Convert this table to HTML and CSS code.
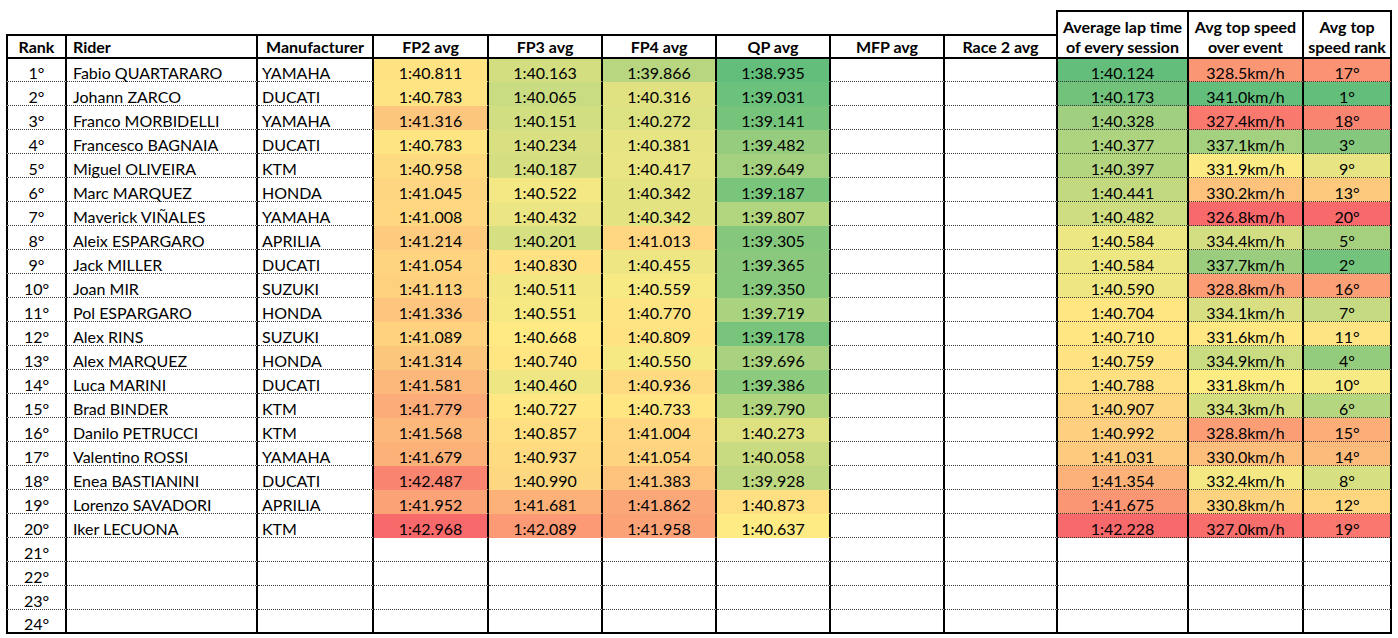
FILE: index.html
```html
<!DOCTYPE html>
<html lang="en">
<head>
<meta charset="utf-8">
<title>Session averages</title>
<link rel="stylesheet" href="styles.css">
</head>
<body>
<div class="sheet">
  <div class="spacer"></div>
  <div class="c tall"><span>Average lap time</span><span>of every session</span></div>
  <div class="c tall"><span>Avg top speed</span><span>over event</span></div>
  <div class="c tall"><span>Avg top</span><span>speed rank</span></div>

  <div class="row head">
    <div class="c">Rank</div><div class="c rider">Rider</div><div class="c manu">Manufacturer</div>
    <div class="c">FP2 avg</div><div class="c">FP3 avg</div><div class="c">FP4 avg</div><div class="c">QP avg</div>
    <div class="c">MFP avg</div><div class="c">Race 2 avg</div>
  </div>

  <div class="row"><div class="c">1°</div><div class="c rider">Fabio QUARTARARO</div><div class="c manu">YAMAHA</div><div class="c lap">1:40.811</div><div class="c lap">1:40.163</div><div class="c lap">1:39.866</div><div class="c lap">1:38.935</div><div class="c"></div><div class="c"></div><div class="c avg">1:40.124</div><div class="c spd">328.5km/h</div><div class="c rk">17°</div></div>
  <div class="row"><div class="c">2°</div><div class="c rider">Johann ZARCO</div><div class="c manu">DUCATI</div><div class="c lap">1:40.783</div><div class="c lap">1:40.065</div><div class="c lap">1:40.316</div><div class="c lap">1:39.031</div><div class="c"></div><div class="c"></div><div class="c avg">1:40.173</div><div class="c spd">341.0km/h</div><div class="c rk">1°</div></div>
  <div class="row"><div class="c">3°</div><div class="c rider">Franco MORBIDELLI</div><div class="c manu">YAMAHA</div><div class="c lap">1:41.316</div><div class="c lap">1:40.151</div><div class="c lap">1:40.272</div><div class="c lap">1:39.141</div><div class="c"></div><div class="c"></div><div class="c avg">1:40.328</div><div class="c spd">327.4km/h</div><div class="c rk">18°</div></div>
  <div class="row"><div class="c">4°</div><div class="c rider">Francesco BAGNAIA</div><div class="c manu">DUCATI</div><div class="c lap">1:40.783</div><div class="c lap">1:40.234</div><div class="c lap">1:40.381</div><div class="c lap">1:39.482</div><div class="c"></div><div class="c"></div><div class="c avg">1:40.377</div><div class="c spd">337.1km/h</div><div class="c rk">3°</div></div>
  <div class="row"><div class="c">5°</div><div class="c rider">Miguel OLIVEIRA</div><div class="c manu">KTM</div><div class="c lap">1:40.958</div><div class="c lap">1:40.187</div><div class="c lap">1:40.417</div><div class="c lap">1:39.649</div><div class="c"></div><div class="c"></div><div class="c avg">1:40.397</div><div class="c spd">331.9km/h</div><div class="c rk">9°</div></div>
  <div class="row"><div class="c">6°</div><div class="c rider">Marc MARQUEZ</div><div class="c manu">HONDA</div><div class="c lap">1:41.045</div><div class="c lap">1:40.522</div><div class="c lap">1:40.342</div><div class="c lap">1:39.187</div><div class="c"></div><div class="c"></div><div class="c avg">1:40.441</div><div class="c spd">330.2km/h</div><div class="c rk">13°</div></div>
  <div class="row"><div class="c">7°</div><div class="c rider">Maverick VIÑALES</div><div class="c manu">YAMAHA</div><div class="c lap">1:41.008</div><div class="c lap">1:40.432</div><div class="c lap">1:40.342</div><div class="c lap">1:39.807</div><div class="c"></div><div class="c"></div><div class="c avg">1:40.482</div><div class="c spd">326.8km/h</div><div class="c rk">20°</div></div>
  <div class="row"><div class="c">8°</div><div class="c rider">Aleix ESPARGARO</div><div class="c manu">APRILIA</div><div class="c lap">1:41.214</div><div class="c lap">1:40.201</div><div class="c lap">1:41.013</div><div class="c lap">1:39.305</div><div class="c"></div><div class="c"></div><div class="c avg">1:40.584</div><div class="c spd">334.4km/h</div><div class="c rk">5°</div></div>
  <div class="row"><div class="c">9°</div><div class="c rider">Jack MILLER</div><div class="c manu">DUCATI</div><div class="c lap">1:41.054</div><div class="c lap">1:40.830</div><div class="c lap">1:40.455</div><div class="c lap">1:39.365</div><div class="c"></div><div class="c"></div><div class="c avg">1:40.584</div><div class="c spd">337.7km/h</div><div class="c rk">2°</div></div>
  <div class="row"><div class="c">10°</div><div class="c rider">Joan MIR</div><div class="c manu">SUZUKI</div><div class="c lap">1:41.113</div><div class="c lap">1:40.511</div><div class="c lap">1:40.559</div><div class="c lap">1:39.350</div><div class="c"></div><div class="c"></div><div class="c avg">1:40.590</div><div class="c spd">328.8km/h</div><div class="c rk">16°</div></div>
  <div class="row"><div class="c">11°</div><div class="c rider">Pol ESPARGARO</div><div class="c manu">HONDA</div><div class="c lap">1:41.336</div><div class="c lap">1:40.551</div><div class="c lap">1:40.770</div><div class="c lap">1:39.719</div><div class="c"></div><div class="c"></div><div class="c avg">1:40.704</div><div class="c spd">334.1km/h</div><div class="c rk">7°</div></div>
  <div class="row"><div class="c">12°</div><div class="c rider">Alex RINS</div><div class="c manu">SUZUKI</div><div class="c lap">1:41.089</div><div class="c lap">1:40.668</div><div class="c lap">1:40.809</div><div class="c lap">1:39.178</div><div class="c"></div><div class="c"></div><div class="c avg">1:40.710</div><div class="c spd">331.6km/h</div><div class="c rk">11°</div></div>
  <div class="row"><div class="c">13°</div><div class="c rider">Alex MARQUEZ</div><div class="c manu">HONDA</div><div class="c lap">1:41.314</div><div class="c lap">1:40.740</div><div class="c lap">1:40.550</div><div class="c lap">1:39.696</div><div class="c"></div><div class="c"></div><div class="c avg">1:40.759</div><div class="c spd">334.9km/h</div><div class="c rk">4°</div></div>
  <div class="row"><div class="c">14°</div><div class="c rider">Luca MARINI</div><div class="c manu">DUCATI</div><div class="c lap">1:41.581</div><div class="c lap">1:40.460</div><div class="c lap">1:40.936</div><div class="c lap">1:39.386</div><div class="c"></div><div class="c"></div><div class="c avg">1:40.788</div><div class="c spd">331.8km/h</div><div class="c rk">10°</div></div>
  <div class="row"><div class="c">15°</div><div class="c rider">Brad BINDER</div><div class="c manu">KTM</div><div class="c lap">1:41.779</div><div class="c lap">1:40.727</div><div class="c lap">1:40.733</div><div class="c lap">1:39.790</div><div class="c"></div><div class="c"></div><div class="c avg">1:40.907</div><div class="c spd">334.3km/h</div><div class="c rk">6°</div></div>
  <div class="row"><div class="c">16°</div><div class="c rider">Danilo PETRUCCI</div><div class="c manu">KTM</div><div class="c lap">1:41.568</div><div class="c lap">1:40.857</div><div class="c lap">1:41.004</div><div class="c lap">1:40.273</div><div class="c"></div><div class="c"></div><div class="c avg">1:40.992</div><div class="c spd">328.8km/h</div><div class="c rk">15°</div></div>
  <div class="row"><div class="c">17°</div><div class="c rider">Valentino ROSSI</div><div class="c manu">YAMAHA</div><div class="c lap">1:41.679</div><div class="c lap">1:40.937</div><div class="c lap">1:41.054</div><div class="c lap">1:40.058</div><div class="c"></div><div class="c"></div><div class="c avg">1:41.031</div><div class="c spd">330.0km/h</div><div class="c rk">14°</div></div>
  <div class="row"><div class="c">18°</div><div class="c rider">Enea BASTIANINI</div><div class="c manu">DUCATI</div><div class="c lap">1:42.487</div><div class="c lap">1:40.990</div><div class="c lap">1:41.383</div><div class="c lap">1:39.928</div><div class="c"></div><div class="c"></div><div class="c avg">1:41.354</div><div class="c spd">332.4km/h</div><div class="c rk">8°</div></div>
  <div class="row"><div class="c">19°</div><div class="c rider">Lorenzo SAVADORI</div><div class="c manu">APRILIA</div><div class="c lap">1:41.952</div><div class="c lap">1:41.681</div><div class="c lap">1:41.862</div><div class="c lap">1:40.873</div><div class="c"></div><div class="c"></div><div class="c avg">1:41.675</div><div class="c spd">330.8km/h</div><div class="c rk">12°</div></div>
  <div class="row"><div class="c">20°</div><div class="c rider">Iker LECUONA</div><div class="c manu">KTM</div><div class="c lap">1:42.968</div><div class="c lap">1:42.089</div><div class="c lap">1:41.958</div><div class="c lap">1:40.637</div><div class="c"></div><div class="c"></div><div class="c avg">1:42.228</div><div class="c spd">327.0km/h</div><div class="c rk">19°</div></div>
  <div class="row"><div class="c">21°</div><div class="c"></div><div class="c"></div><div class="c"></div><div class="c"></div><div class="c"></div><div class="c"></div><div class="c"></div><div class="c"></div><div class="c"></div><div class="c"></div><div class="c"></div></div>
  <div class="row"><div class="c">22°</div><div class="c"></div><div class="c"></div><div class="c"></div><div class="c"></div><div class="c"></div><div class="c"></div><div class="c"></div><div class="c"></div><div class="c"></div><div class="c"></div><div class="c"></div></div>
  <div class="row"><div class="c">23°</div><div class="c"></div><div class="c"></div><div class="c"></div><div class="c"></div><div class="c"></div><div class="c"></div><div class="c"></div><div class="c"></div><div class="c"></div><div class="c"></div><div class="c"></div></div>
  <div class="row last"><div class="c">24°</div><div class="c"></div><div class="c"></div><div class="c"></div><div class="c"></div><div class="c"></div><div class="c"></div><div class="c"></div><div class="c"></div><div class="c"></div><div class="c"></div><div class="c"></div></div>
</div>
<script src="script.js"></script>
</body>
</html>
```

FILE: styles.css
```css
* { box-sizing: border-box; }

body {
  margin: 0;
  background: #fff;
  color: #000;
  font-family: Lato, "Liberation Sans", sans-serif;
  font-size: 16px;
}

.sheet {
  display: grid;
  grid-template-columns: 61px 191px 116px 115px 114px 114px 114px 114px 113px 131px 115px 88px;
  grid-template-rows: 24px 25px 23px repeat(23, 24px);
  width: 1386px;
  margin: 10px 0 0 6px;
}

.row { display: contents; }

.c {
  display: flex;
  align-items: flex-end;
  justify-content: center;
  white-space: nowrap;
  line-height: 1;
  border-right: 2px solid #000;
  border-bottom: 1px dotted #3a3a3a;
}

.row .c:first-child { border-left: 2px solid #000; }

.spacer {
  grid-column: 1 / 10;
  border-right: 2px solid #000;
}

.tall {
  grid-row: span 2;
  flex-direction: column;
  align-items: center;
  justify-content: flex-end;
  font-weight: 700;
  line-height: 20px;
  border-top: 2px solid #000;
  border-bottom: 2px solid #000;
}

.head .c {
  align-items: center;
  font-weight: 700;
  border-top: 2px solid #000;
  border-bottom: 2px solid #000;
}

.rider { justify-content: flex-start; padding-left: 6px; }
.manu { justify-content: flex-start; padding-left: 4px; }
.head .manu { justify-content: center; padding-left: 0; }

.lap { border-bottom-color: transparent; }

.row.last .c { border-bottom: 2px solid #000; }
```

FILE: script.js
```js
(function () {
  var GREEN = [99, 190, 123], YELLOW = [255, 235, 132], RED = [248, 105, 107];

  function parse(t) {
    t = t.trim();
    if (t.indexOf(':') > -1) {
      var p = t.split(':');
      return parseFloat(p[0]) * 60 + parseFloat(p[1]);
    }
    return parseFloat(t);
  }

  function median(a) {
    var s = a.slice().sort(function (x, y) { return x - y; });
    var r = (s.length - 1) * 0.5, lo = Math.floor(r), hi = Math.ceil(r);
    return s[lo] + (s[hi] - s[lo]) * (r - lo);
  }

  function mix(a, b, t) {
    return 'rgb(' + a.map(function (v, i) { return Math.round(v + (b[i] - v) * t); }).join(',') + ')';
  }

  function paint(sel, highIsGood) {
    var cells = Array.prototype.slice.call(document.querySelectorAll(sel));
    var vals = cells.map(function (c) { return parse(c.textContent); });
    var min = Math.min.apply(null, vals), max = Math.max.apply(null, vals), mid = median(vals);
    var lowC = highIsGood ? RED : GREEN, highC = highIsGood ? GREEN : RED;
    cells.forEach(function (c, i) {
      var v = vals[i];
      c.style.backgroundColor = v <= mid
        ? mix(lowC, YELLOW, mid === min ? 1 : (v - min) / (mid - min))
        : mix(YELLOW, highC, (v - mid) / (max - mid));
    });
  }

  paint('.lap', false);
  paint('.avg', false);
  paint('.spd', true);
  paint('.rk', false);
})();
```
